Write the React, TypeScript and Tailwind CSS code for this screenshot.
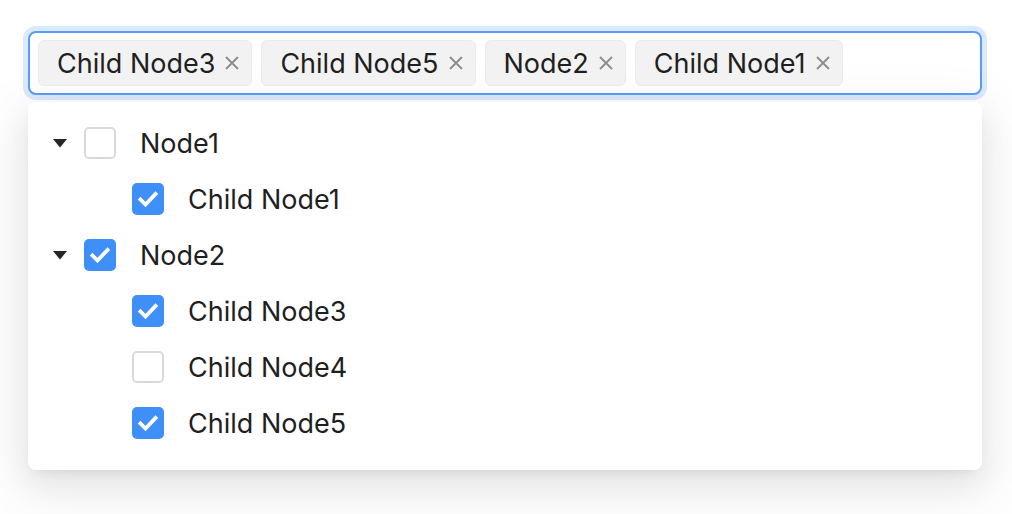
import React from "react";

const font = { fontFamily: "Inter, 'Noto Sans', sans-serif" };

function CloseIcon() {
  return (
    <svg width="14" height="14" viewBox="0 0 14 14" className="shrink-0">
      <path d="M1 1 L13 13 M13 1 L1 13" stroke="#8c8c8c" strokeWidth="1.8" strokeLinecap="butt" />
    </svg>
  );
}

function Tag({ label }: { label: string }) {
  return (
    <div className="flex h-[46px] items-center rounded-[6px] border border-[#ebebeb] bg-[#f2f2f2] pl-[18px] pr-[12px]">
      <span className="text-[27px] leading-none text-[#1f1f1f]">{label}</span>
      <span className="ml-[10px] flex items-center">
        <CloseIcon />
      </span>
    </div>
  );
}

function Checkbox({ checked }: { checked: boolean }) {
  if (checked) {
    return (
      <div className="flex h-[32px] w-[32px] shrink-0 items-center justify-center rounded-[5px] bg-[#3e8ff7]">
        <svg width="32" height="32" viewBox="0 0 32 32">
          <path d="M8.5 16.5 L13.5 21.5 L23.5 11" fill="none" stroke="#ffffff" strokeWidth="3.8" strokeLinecap="square" strokeLinejoin="miter" />
        </svg>
      </div>
    );
  }
  return <div className="h-[32px] w-[32px] shrink-0 rounded-[5px] border-2 border-[#d9d9d9] bg-white" />;
}

function Caret() {
  return (
    <svg width="14" height="9" viewBox="0 0 14 9">
      <path d="M0 0 L14 0 L7 8.5 Z" fill="#262626" />
    </svg>
  );
}

function Row({ label, checked, parent }: { label: string; checked: boolean; parent?: boolean }) {
  return (
    <div className="flex h-[56px] items-center pl-[16px]">
      {parent ? (
        <div className="flex w-[32px] items-center justify-center">
          <Caret />
        </div>
      ) : (
        <div className="w-[88px]" />
      )}
      <div className={parent ? "ml-[8px]" : ""}>
        <Checkbox checked={checked} />
      </div>
      <span className="ml-[24px] text-[27px] leading-none text-[#1f1f1f]">{label}</span>
    </div>
  );
}

export default function App() {
  return (
    <div className="min-h-[514px] w-[1012px] bg-white pl-[28px] pt-[31px]" style={font}>
      <div className="flex h-[64px] w-[954px] items-center gap-[9px] rounded-[8px] border-2 border-[#5a9cf8] bg-white pl-[8px] shadow-[0_0_0_5px_#dbe9fd]">
        <Tag label="Child Node3" />
        <Tag label="Child Node5" />
        <Tag label="Node2" />
        <Tag label="Child Node1" />
      </div>
      <div className="mt-[7px] w-[954px] rounded-[8px] bg-white pb-[19px] pt-[13px] shadow-[0_12px_32px_0_rgba(0,0,0,0.08),0_6px_12px_-8px_rgba(0,0,0,0.12),0_18px_56px_16px_rgba(0,0,0,0.05)]">
        <Row label="Node1" checked={false} parent />
        <Row label="Child Node1" checked />
        <Row label="Node2" checked parent />
        <Row label="Child Node3" checked />
        <Row label="Child Node4" checked={false} />
        <Row label="Child Node5" checked />
      </div>
    </div>
  );
}
